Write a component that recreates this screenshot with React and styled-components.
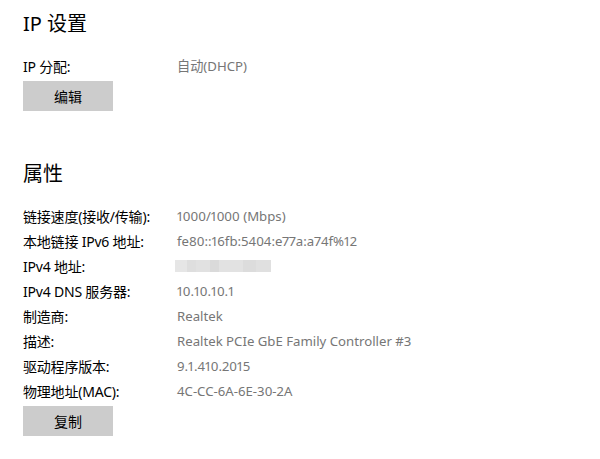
import React from 'react';
import styled, { createGlobalStyle } from 'styled-components';

const GlobalStyle = createGlobalStyle`
  html, body {
    margin: 0;
    padding: 0;
    background: #ffffff;
  }
  body {
    font-family: 'Noto Sans', 'Noto Sans CJK SC', sans-serif;
    color: #000;
  }
`;

const Page = styled.div`
  padding: 10px 23px 20px;
  width: 600px;
  box-sizing: border-box;
`;

const Section = styled.section`
  & + & {
    margin-top: 49px;
  }
`;

const Heading = styled.h2`
  margin: 0 0 15px;
  font-size: 20px;
  font-weight: 400;
  line-height: 28px;
  font-family: 'Noto Sans', 'Noto Sans CJK SC', sans-serif;
`;

const Row = styled.div`
  display: grid;
  grid-template-columns: 154px 1fr;
  height: 25px;
  align-items: center;
  font-size: 14px;
  font-family: 'Noto Sans', 'Noto Sans CJK SC', sans-serif;
`;

const Label = styled.span`
  color: #000;
  white-space: nowrap;
  font-variant-numeric: proportional-nums;
  letter-spacing: -0.2px;
`;

const Value = styled.span`
  color: #767676;
  white-space: nowrap;
  font-size: 13.2px;
  font-variant-numeric: proportional-nums;
`;

const Redacted = styled.span`
  display: block;
  width: 96px;
  height: 12px;
  margin-left: -2px;
  background: linear-gradient(
    90deg,
    #e6e6e6 0 12%,
    #dedede 12% 22%,
    #e1e1e1 22% 36%,
    #dadada 36% 46%,
    #e2e2e2 46% 71%,
    #dcdcdc 71% 84%,
    #e0e0e0 84% 100%
  );
`;

const Button = styled.button`
  display: flex;
  align-items: center;
  justify-content: center;
  width: 90px;
  height: 30px;
  margin-top: 3px;
  padding: 0;
  border: none;
  background: #cccccc;
  color: #000;
  font-size: 14px;
  font-family: 'Noto Sans', 'Noto Sans CJK SC', sans-serif;
`;

const properties = [
  ['链接速度(接收/传输):', '1000/1000 (Mbps)'],
  ['本地链接 IPv6 地址:', 'fe80::16fb:5404:e77a:a74f%12'],
  ['IPv4 地址:', null],
  ['IPv4 DNS 服务器:', '10.10.10.1'],
  ['制造商:', 'Realtek'],
  ['描述:', 'Realtek PCIe GbE Family Controller #3'],
  ['驱动程序版本:', '9.1.410.2015'],
  ['物理地址(MAC):', '4C-CC-6A-6E-30-2A'],
];

const App = () => (
  <Page>
    <GlobalStyle />
    <Section>
      <Heading>IP 设置</Heading>
      <Row>
        <Label>IP 分配:</Label>
        <Value>自动(DHCP)</Value>
      </Row>
      <Button>编辑</Button>
    </Section>
    <Section>
      <Heading>属性</Heading>
      {properties.map(([label, value]) => (
        <Row key={label}>
          <Label>{label}</Label>
          {value ? <Value>{value}</Value> : <Redacted />}
        </Row>
      ))}
      <Button>复制</Button>
    </Section>
  </Page>
);

export default App;
